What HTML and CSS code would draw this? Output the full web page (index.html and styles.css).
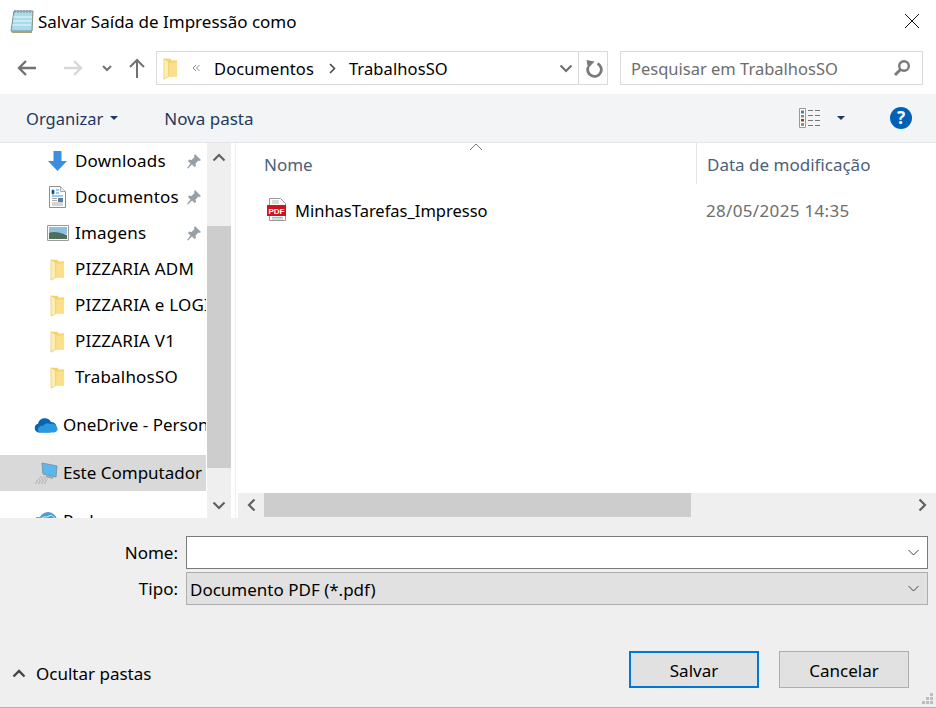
FILE: index.html
```html
<!DOCTYPE html>
<html lang="pt-BR">
<head>
    <meta charset="UTF-8">
    <title>Salvar Saída de Impressão como</title>
    <link rel="stylesheet" href="styles.css">
</head>
<body>
<svg class="defs" width="0" height="0">
    <defs>
        <symbol id="folder" viewBox="0 0 16 24">
            <path d="M1 2h7l1 2h6v17H6l-5 3z" fill="#f6d365"/>
            <path d="M6 6h9v15H6z" fill="#fbdf8a"/>
            <path d="M1 2l5 3v16l-5 3z" fill="#fdeeb5"/>
            <path d="M1 2l5 3v16l-5 3z" fill="none" stroke="#e8c25c" stroke-width=".6"/>
        </symbol>
        <symbol id="pin" viewBox="0 0 16 16">
            <path d="M9 1l6 6-1.500 1-1-.5-3 3 .5 2.500-1.500 1-2.500-2.500L2 15.500 1 15l3.500-4.500L2 8l1-1.500 2.500.5 3-3-.5-1z" fill="#96a0a8"/>
        </symbol>
    </defs>
</svg>

<div class="dialog">
    <div class="titlebar">
        <svg class="app-icon" width="24" height="25" viewBox="0 0 24 25">
            <path d="M4 2h19l-1 20H1z" fill="#a9dbe8" stroke="#6f8f9a"/>
            <path d="M3.500 8h18.500M3 12h18.500M2.500 16h18.500" stroke="#d6f0f6" stroke-width="1.500"/>
            <path d="M22.500 3l.5 2-1 19H2l-1-2h21z" fill="#b39f6e"/>
            <path d="M5 1v3M8 1v3M11 1v3M14 1v3M17 1v3M20 1v3" stroke="#7f8f99"/>
        </svg>
        <span class="title">Salvar Saída de Impressão como</span>
        <svg class="close" width="16" height="16" viewBox="0 0 16 16"><path d="M1 1l14 14M15 1L1 15" stroke="#111" fill="none"/></svg>
    </div>

    <div class="navbar">
        <svg class="nav-btn back" width="20" height="18" viewBox="0 0 20 18"><path d="M19 9H2M9 2L2 9l7 7" fill="none" stroke="#727272" stroke-width="2.400"/></svg>
        <svg class="nav-btn forward" width="20" height="18" viewBox="0 0 20 18"><path d="M1 9h17M11 2l7 7-7 7" fill="none" stroke="#d8d8d8" stroke-width="2.400"/></svg>
        <svg class="nav-btn recent" width="10" height="7" viewBox="0 0 10 7"><path d="M1 1l4 4 4-4" fill="none" stroke="#727272" stroke-width="2"/></svg>
        <svg class="nav-btn up" width="16" height="20" viewBox="0 0 16 20"><path d="M8 20V2M1 9l7-7 7 7" fill="none" stroke="#727272" stroke-width="2"/></svg>
        <div class="address">
            <svg class="addr-folder" width="15" height="24"><use href="#folder"/></svg>
            <svg class="addr-more" width="8" height="8" viewBox="0 0 8 8"><path d="M4 1L1 4l3 3M7.500 1l-3 3 3 3" fill="none" stroke="#8a8a8a"/></svg>
            <span class="crumb">Documentos</span>
            <svg class="crumb-sep" width="7" height="11" viewBox="0 0 7 11"><path d="M1 1l4.500 4.500L1 10" fill="none" stroke="#444" stroke-width="1.500"/></svg>
            <span class="crumb">TrabalhosSO</span>
            <svg class="addr-drop" width="14" height="9" viewBox="0 0 14 9"><path d="M1.500 1.500L7 7l5.500-5.500" fill="none" stroke="#727272" stroke-width="2.200"/></svg>
            <div class="addr-refresh">
                <svg width="18" height="19" viewBox="0 0 18 19"><path d="M12.500 4.500A6.800 6.800 0 1 1 3.200 8" fill="none" stroke="#7a7a7a" stroke-width="2.800"/><path d="M1.500 1L9.500 2.500 3 9.500z" fill="#7a7a7a"/></svg>
            </div>
        </div>
        <div class="search">
            <span class="search-text">Pesquisar em TrabalhosSO</span>
            <svg width="18" height="18" viewBox="0 0 18 18"><circle cx="11" cy="7" r="4.800" fill="none" stroke="#7a7a7a" stroke-width="2.400"/><path d="M7.500 10.500L2 16" stroke="#7a7a7a" stroke-width="3"/></svg>
        </div>
    </div>

    <div class="toolbar">
        <span class="tool organize">Organizar</span>
        <span class="caret organize-caret"></span>
        <span class="tool new-folder">Nova pasta</span>
        <svg class="views" width="22" height="20" viewBox="0 0 22 20">
            <path d="M.5.500h6v19h-6z" fill="#fff" stroke="#9a9a9a"/>
            <path d="M2 2.500h3v3H2z" fill="#4a7fb0"/>
            <path d="M2 7h3v2.500H2z" fill="#a08a3c"/>
            <path d="M2 11h3v2.500H2z" fill="#b03020"/>
            <path d="M2 15h3v3H2z" fill="#8a9a70"/>
            <path d="M9 2.500h5M16 2.500h5M9 7.500h5M16 7.500h5M9 12.500h5M16 12.500h5M9 17.500h5M16 17.500h5" stroke="#777"/>
        </svg>
        <span class="caret views-caret"></span>
        <span class="help">?</span>
    </div>

    <div class="main">
        <div class="sidebar">
            <ul class="tree">
                <li class="tree-item indent downloads">
                    <svg class="tree-icon" width="19" height="20" viewBox="0 0 19 20"><path d="M5.500 0h8v10h5.500l-9.500 10L0 10h5.500z" fill="#3a8fe0"/></svg>
                    <span>Downloads</span>
                    <svg class="pin" width="16" height="16"><use href="#pin"/></svg>
                </li>
                <li class="tree-item indent documents">
                    <svg class="tree-icon" width="17" height="22" viewBox="0 0 17 22"><path d="M.5.500h11l5 5v16H.5z" fill="#fff" stroke="#8e8e8e"/><path d="M11.500.500v5h5" fill="#eee" stroke="#aaa"/><path d="M3 4h2v4H3zM7 4h3M7 7h3M3 10h11" stroke="#3a96e0"/><path d="M3 12.500h5M3 14.500h5M3 17h11M3 19h11" stroke="#aaa"/><path d="M9 12h5v4H9z" fill="#5a7f98"/></svg>
                    <span>Documentos</span>
                    <svg class="pin" width="16" height="16"><use href="#pin"/></svg>
                </li>
                <li class="tree-item indent pictures">
                    <svg class="tree-icon" width="22" height="16" viewBox="0 0 22 16"><path d="M.5.500h21v15H.5z" fill="#fff" stroke="#9a9a9a"/><path d="M2 2h18v7H2z" fill="#8fc0e0"/><path d="M2 8c5-2 9-1 18 2v4H2z" fill="#4f6f5c"/></svg>
                    <span>Imagens</span>
                    <svg class="pin" width="16" height="16"><use href="#pin"/></svg>
                </li>
                <li class="tree-item indent"><svg class="tree-icon" width="15" height="24"><use href="#folder"/></svg><span>PIZZARIA ADM</span></li>
                <li class="tree-item indent"><svg class="tree-icon" width="15" height="24"><use href="#folder"/></svg><span>PIZZARIA e LOGIN</span></li>
                <li class="tree-item indent"><svg class="tree-icon" width="15" height="24"><use href="#folder"/></svg><span>PIZZARIA V1</span></li>
                <li class="tree-item indent"><svg class="tree-icon" width="15" height="24"><use href="#folder"/></svg><span>TrabalhosSO</span></li>
                <li class="tree-item root group-gap">
                    <svg class="tree-icon" width="24" height="16" viewBox="0 0 24 16"><path d="M5 15.500a4.500 4.500 0 0 1-1-8.800A7 7 0 0 1 17 5a5 5 0 0 1 5 7l-6 3.500z" fill="#0a64b4"/><path d="M5 15.500h15a3.500 3.500 0 0 0 2.500-6 5 5 0 0 0-6.500-2.500 5 5 0 0 0-7 2 4 4 0 0 0-4 6.500z" fill="#2a9ae0"/></svg>
                    <span>OneDrive - Personal</span>
                </li>
                <li class="tree-item root selected group-gap">
                    <svg class="tree-icon" width="24" height="22" viewBox="0 0 24 22"><path d="M8 1l15 3-1 11-13-3z" fill="#5ab8f0" stroke="#7a96a8"/><path d="M12 14l7 2" stroke="#9aa4aa" stroke-width="2"/><path d="M6 15h7M4 17h10M2 19h11M1 21h11" stroke="#a8adb0" stroke-dasharray="2 1"/></svg>
                    <span>Este Computador</span>
                </li>
                <li class="tree-item root group-gap network">
                    <svg class="tree-icon" width="22" height="22" viewBox="0 0 22 22"><circle cx="13" cy="11" r="9" fill="#4a9ed0"/><path d="M6 8c3-2 5 0 8-2s4 1 6 2" stroke="#d8eef8" fill="none"/><path d="M1 7h6v6H1z" fill="#8aa0b0"/></svg>
                    <span>Rede</span>
                </li>
            </ul>
        </div>
        <div class="vscroll">
            <svg class="arrow" width="14" height="9" viewBox="0 0 14 9"><path d="M1.500 7.500L7 2l5.500 5.500" fill="none" stroke="#606060" stroke-width="2.200"/></svg>
            <div class="vtrack"><div class="vthumb"></div></div>
            <svg class="arrow" width="14" height="9" viewBox="0 0 14 9"><path d="M1.500 1.500L7 7l5.500-5.500" fill="none" stroke="#606060" stroke-width="2.200"/></svg>
        </div>
        <div class="files">
            <div class="columns">
                <div class="col col-name">Nome
                    <svg class="sort" width="14" height="8" viewBox="0 0 14 8"><path d="M1 7l6-6 6 6" fill="none" stroke="#7a7a7a"/></svg>
                </div>
                <div class="col col-date">Data de modificação</div>
            </div>
            <div class="file-list">
                <div class="file">
                    <div class="file-name">
                        <svg class="pdf" width="20" height="23" viewBox="0 0 20 23">
                            <path d="M2.500.500h11l5 5v17h-16z" fill="#fff" stroke="#9a9a9a"/>
                            <path d="M5 3h7M5 5h7M5 19.500h11M5 21h11" stroke="#b5b5b5"/>
                            <rect x="0" y="7" width="19" height="11" fill="#d3121f"/>
                            <text x="9.500" y="15.500" class="pdf-label">PDF</text>
                        </svg>
                        <span>MinhasTarefas_Impresso</span>
                    </div>
                    <div class="file-date">28/05/2025 14:35</div>
                </div>
            </div>
            <div class="hscroll">
                <svg class="harrow" width="9" height="14" viewBox="0 0 9 14"><path d="M7.500 1.500L2 7l5.500 5.500" fill="none" stroke="#606060" stroke-width="2.200"/></svg>
                <div class="htrack"><div class="hthumb"></div></div>
                <svg class="harrow" width="9" height="14" viewBox="0 0 9 14"><path d="M1.500 1.500L7 7l-5.500 5.500" fill="none" stroke="#606060" stroke-width="2.200"/></svg>
            </div>
        </div>
    </div>

    <div class="footer">
        <div class="form">
            <label class="form-label">Nome:</label>
            <div class="field field-input">
                <svg width="11" height="7" viewBox="0 0 11 7"><path d="M.5 1l5 5 5-5" fill="none" stroke="#444"/></svg>
            </div>
            <label class="form-label">Tipo:</label>
            <div class="field field-select">
                <span>Documento PDF (*.pdf)</span>
                <svg width="11" height="7" viewBox="0 0 11 7"><path d="M.5 1l5 5 5-5" fill="none" stroke="#444"/></svg>
            </div>
        </div>
        <div class="actions">
            <div class="hide-folders">
                <svg width="14" height="9" viewBox="0 0 14 9"><path d="M1.500 7.500L7 2l5.500 5.500" fill="none" stroke="#444" stroke-width="2.400"/></svg>
                <span>Ocultar pastas</span>
            </div>
            <div class="btn btn-primary">Salvar</div>
            <div class="btn">Cancelar</div>
        </div>
        <svg class="grip" width="12" height="12" viewBox="0 0 12 12"><path d="M8 0h3v3H8zM4 4h3v3H4zM8 4h3v3H8zM0 8h3v3H0zM4 8h3v3H4zM8 8h3v3H8z" fill="#bdbdbd"/></svg>
    </div>
</div>
</body>
</html>
```

FILE: styles.css
```css
html, body {
    margin: 0;
    height: 100%;
    overflow: hidden;
}
body {
    font-family: "Noto Sans", "Open Sans", sans-serif;
    font-size: 17px;
    color: #000;
    background-color: #fff;
}
.defs {
    position: absolute;
}
svg {
    display: block;
    flex: none;
}
.dialog {
    display: flex;
    flex-direction: column;
    height: 708px;
}

/* titulo */
.titlebar {
    display: flex;
    align-items: center;
    height: 42px;
    padding: 0 16px 0 10px;
}
.title {
    margin-left: 4px;
}
.close {
    margin-left: auto;
}

/* navegacao */
.navbar {
    display: flex;
    align-items: center;
    height: 34px;
    margin-top: 9px;
    padding-right: 13px;
}
.back {
    margin-left: 17px;
}
.forward {
    margin-left: 26px;
}
.recent {
    margin-left: 19px;
}
.up {
    margin-left: 17px;
}
.address {
    display: flex;
    align-items: center;
    box-sizing: border-box;
    width: 452px;
    height: 34px;
    margin-left: 11px;
    padding-left: 6px;
    border: 1px solid #d9d9d9;
}
.addr-more {
    margin: 0 14px 0 14px;
}
.crumb {
    font-size: 16.5px;
    letter-spacing: .1px;
}
.crumb-sep {
    margin: 0 13px 0 15px;
}
.addr-drop {
    margin-left: auto;
    margin-right: 5px;
}
.addr-refresh {
    display: flex;
    align-items: center;
    justify-content: center;
    width: 29px;
    height: 32px;
    padding-left: 2px;
    box-sizing: border-box;
    border-left: 1px solid #d9d9d9;
}
.search {
    display: flex;
    align-items: center;
    justify-content: space-between;
    box-sizing: border-box;
    width: 303px;
    height: 34px;
    margin-left: 12px;
    padding: 0 11px 0 10px;
    border: 1px solid #d9d9d9;
}
.search-text {
    color: #6d6d6d;
    font-size: 16.5px;
}

/* barra de ferramentas */
.toolbar {
    display: flex;
    align-items: center;
    height: 48px;
    margin-top: 9px;
    padding-left: 26px;
    background-color: #f3f4f6;
    border-bottom: 1px solid #e3e5e8;
}
.tool {
    color: #1e395b;
}
.organize {
    font-size: 16.5px;
}
.caret {
    width: 0;
    height: 0;
    border-left: 4px solid transparent;
    border-right: 4px solid transparent;
    border-top: 4px solid #1e395b;
}
.organize-caret {
    margin-left: 7px;
}
.new-folder {
    margin-left: 46px;
}
.views {
    margin-left: auto;
    margin-right: 1px;
}
.views-caret {
    margin-left: 15px;
}
.help {
    width: 22px;
    height: 22px;
    margin: 0 24px 0 45px;
    border-radius: 50%;
    background-color: #0062b6;
    color: #fff;
    font-size: 17px;
    font-weight: 700;
    line-height: 22px;
    text-align: center;
}

/* painel principal */
.main {
    display: flex;
    height: 375px;
    overflow: hidden;
}
.sidebar {
    width: 206px;
    overflow: hidden;
    flex: none;
}
.tree {
    list-style: none;
    margin: 0;
    padding: 0;
}
.tree-item {
    position: relative;
    display: flex;
    align-items: center;
    height: 36px;
    white-space: nowrap;
}
.tree-item span {
    position: absolute;
    margin-bottom: 2px;
}
.indent span {
    left: 75px;
    letter-spacing: .2px;
}
.root span {
    left: 63px;
}
.indent .tree-icon {
    margin-left: 50px;
}
.downloads .tree-icon {
    margin-left: 48px;
}
.documents .tree-icon {
    margin-left: 49px;
}
.pictures .tree-icon {
    margin-left: 47px;
}
.root .tree-icon {
    margin-left: 34px;
}
.network .tree-icon {
    margin-left: 35px;
}
.pin {
    position: absolute;
    left: 186px;
}
.group-gap {
    margin-top: 12px;
}
.selected {
    background-color: #d9d9d9;
}

.vscroll {
    display: flex;
    flex-direction: column;
    align-items: center;
    width: 24px;
    margin-left: 1px;
    background-color: #efefef;
    flex: none;
    padding: 10px 0 8px;
    box-sizing: border-box;
}
.vtrack {
    flex: 1;
    width: 100%;
    margin: 0;
}
.vthumb {
    width: 100%;
    height: 242px;
    margin-top: 64px;
    background-color: #cdcdcd;
}

.files {
    display: flex;
    flex-direction: column;
    flex: 1;
    min-width: 0;
    margin-left: 4px;
    border-left: 1px solid #f0f0f0;
}
.columns {
    display: flex;
    height: 41px;
    color: #4c607a;
}
.col {
    display: flex;
    align-items: center;
    box-sizing: border-box;
    padding-top: 2px;
}
.col-name {
    position: relative;
    width: 461px;
    padding-left: 28px;
    border-right: 1px solid #e5e5e5;
}
.col-date {
    padding-left: 10px;
    white-space: nowrap;
}
.sort {
    position: absolute;
    left: 233px;
    top: 0;
}
.file-list {
    flex: 1;
}
.file {
    display: flex;
    align-items: center;
    height: 36px;
    margin-top: 8px;
}
.file-name {
    display: flex;
    align-items: center;
    width: 460px;
    padding-left: 31px;
    box-sizing: border-box;
    font-size: 16.5px;
}
.pdf {
    margin-bottom: 2px;
}
.file-name span {
    margin-left: 8px;
}
.pdf-label {
    fill: #fff;
    font-family: "Liberation Sans", sans-serif;
    font-size: 8px;
    font-weight: 700;
    text-anchor: middle;
}
.file-date {
    padding-left: 10px;
    color: #6d6d6d;
    white-space: nowrap;
    letter-spacing: .33px;
}
.hscroll {
    display: flex;
    align-items: center;
    height: 25px;
    margin-left: 2px;
    padding: 0 9px 1px 9px;
    box-sizing: border-box;
    background-color: #efefef;
}
.htrack {
    flex: 1;
    height: 24px;
    margin: 0 8px;
}
.hthumb {
    width: 427px;
    height: 24px;
    background-color: #cdcdcd;
}

/* rodape */
.footer {
    position: relative;
    display: flex;
    flex-direction: column;
    flex: 1;
    box-sizing: border-box;
    background-color: #efefef;
    border-bottom: 1px solid #b0b0b0;
    padding: 18px 8px 19px 12px;
}
.form {
    display: grid;
    grid-template-columns: 166px 1fr;
    column-gap: 8px;
    row-gap: 3px;
}
.form-label {
    text-align: right;
    line-height: 33px;
}
.field {
    display: flex;
    align-items: center;
    justify-content: space-between;
    box-sizing: border-box;
    height: 33px;
    padding: 0 8px 0 3px;
    border: 1px solid #7a7a7a;
}
.field span {
    padding-top: 1px;
}
.field svg {
    margin-left: auto;
}
.field-input {
    background-color: #fff;
}
.field-select {
    background-color: #e1e1e1;
    border-color: #adadad;
}
.actions {
    display: flex;
    align-items: center;
    margin-top: auto;
    padding-right: 19px;
}
.hide-folders {
    display: flex;
    align-items: center;
    gap: 10px;
    margin-right: auto;
    padding-top: 7px;
}
.btn {
    box-sizing: border-box;
    width: 130px;
    height: 37px;
    margin-left: 20px;
    border: 1px solid #adadad;
    background-color: #e1e1e1;
    line-height: 37px;
    text-align: center;
}
.btn-primary {
    border: 2px solid #0078d7;
    line-height: 35px;
}
.grip {
    position: absolute;
    right: 2px;
    bottom: 2px;
}
```
